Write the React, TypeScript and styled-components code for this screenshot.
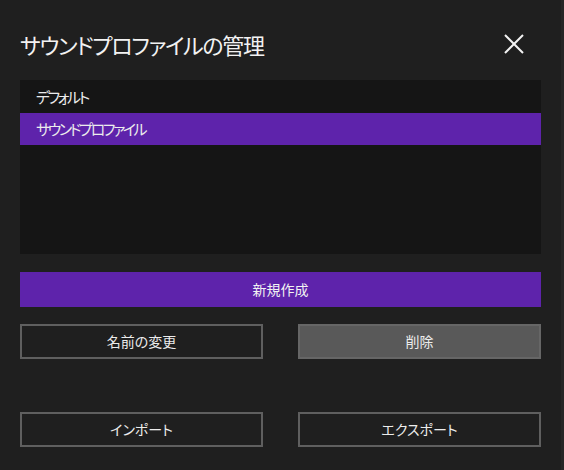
import styled, { createGlobalStyle } from 'styled-components';

const GlobalStyle = createGlobalStyle`
    html, body {
        margin: 0;
        background-color: #1f1f1f;
    }

    body {
        font-family: 'Noto Sans CJK JP', 'Noto Sans', sans-serif;
        font-feature-settings: 'palt';
        color: #f2f2f2;
    }
`;

const StyledDialog = styled.div`
    box-sizing: border-box;
    width: 564px;
    height: 470px;
    padding: 0 20px 0 20px;
    border-right: 3px solid #262626;
    display: flex;
    flex-direction: column;
`;

const StyledHeader = styled.div`
    display: flex;
    justify-content: space-between;
    align-items: center;
    height: 44px;
    margin-top: 22px;
`;

const StyledTitle = styled.h2`
    margin: 0;
    font-size: 22px;
    font-weight: 400;
    line-height: 1;
    letter-spacing: -1.3px;
    color: #f2f2f2;
`;

const StyledClose = styled.button`
    all: unset;
    width: 20px;
    height: 20px;
    margin-right: 17px;
    display: flex;
    cursor: pointer;
`;

const StyledList = styled.ul`
    list-style: none;
    margin: 14px 0 0;
    padding: 1px 0 0;
    height: 173px;
    background-color: #151515;
`;

const StyledItem = styled.li<{ $selected?: boolean }>`
    height: 32px;
    line-height: 32px;
    padding-left: 16px;
    font-size: 15px;
    letter-spacing: -2.4px;
    color: #ececec;
    background-color: ${(p) => (p.$selected ? '#5e23ab' : 'transparent')};
`;

const StyledPrimary = styled.button`
    all: unset;
    box-sizing: border-box;
    height: 35px;
    margin-top: 18px;
    text-align: center;
    font-size: 14px;
    line-height: 35px;
    color: #f2f2f2;
    background-color: #5e23ab;
`;

const StyledRow = styled.div<{ $gap: number }>`
    display: grid;
    grid-template-columns: 1fr 1fr;
    column-gap: 35px;
    margin-top: ${(p) => p.$gap}px;
`;

const StyledButton = styled.button<{ $filled?: boolean }>`
    all: unset;
    box-sizing: border-box;
    height: 35px;
    text-align: center;
    font-size: 14px;
    line-height: 31px;
    color: #ececec;
    border: 2px solid ${(p) => (p.$filled ? '#666666' : '#5f5f5f')};
    background-color: ${(p) => (p.$filled ? '#595959' : 'transparent')};
`;

const profiles = ['デフォルト', 'サウンドプロファイル'];

export default function App() {
    return (
        <>
            <GlobalStyle />
            <StyledDialog>
                <StyledHeader>
                    <StyledTitle>サウンドプロファイルの管理</StyledTitle>
                    <StyledClose aria-label="閉じる">
                        <svg width="20" height="20" viewBox="0 0 20 20">
                            <path
                                d="M1 1 L19 19 M19 1 L1 19"
                                stroke="#f2f2f2"
                                strokeWidth="2"
                                fill="none"
                            />
                        </svg>
                    </StyledClose>
                </StyledHeader>
                <StyledList>
                    {profiles.map((name, i) => (
                        <StyledItem key={name} $selected={i === 1}>
                            {name}
                        </StyledItem>
                    ))}
                </StyledList>
                <StyledPrimary>新規作成</StyledPrimary>
                <StyledRow $gap={17}>
                    <StyledButton>名前の変更</StyledButton>
                    <StyledButton $filled>削除</StyledButton>
                </StyledRow>
                <StyledRow $gap={53}>
                    <StyledButton>インポート</StyledButton>
                    <StyledButton>エクスポート</StyledButton>
                </StyledRow>
            </StyledDialog>
        </>
    );
}
